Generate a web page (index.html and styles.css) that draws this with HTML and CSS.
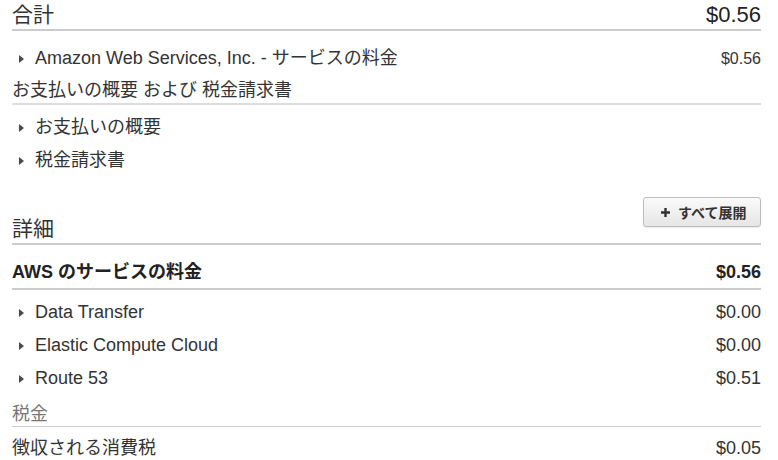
FILE: index.html
```html
<!DOCTYPE html>
<html lang="ja">
<head>
<meta charset="utf-8">
<link rel="stylesheet" href="styles.css">
</head>
<body>
<div class="page">
  <div class="heading-row">
    <h2 class="heading">合計</h2>
    <span class="heading-amount">$0.56</span>
  </div>
  <div class="row row-first">
    <span class="label"><span class="caret"></span>Amazon Web Services, Inc. - サービスの料金</span>
    <span class="amount amount-small">$0.56</span>
  </div>
  <div class="subheading">お支払いの概要 および 税金請求書</div>
  <div class="list list-pay">
    <div class="row"><span class="label"><span class="caret"></span>お支払いの概要</span></div>
    <div class="row"><span class="label"><span class="caret"></span>税金請求書</span></div>
  </div>

  <div class="detail-head">
    <h2 class="heading">詳細</h2>
    <button class="expand-btn" type="button">
      <svg class="plus" width="9" height="9" viewBox="0 0 9 9"><path d="M3.3 0h2.4v3.3H9v2.4H5.7V9H3.3V5.7H0V3.3h3.3z" fill="#333"/></svg>
      すべて展開
    </button>
  </div>
  <div class="group-row">
    <span class="group-label">AWS のサービスの料金</span>
    <span class="group-amount">$0.56</span>
  </div>
  <div class="list list-services">
    <div class="row"><span class="label"><span class="caret"></span>Data Transfer</span><span class="amount">$0.00</span></div>
    <div class="row"><span class="label"><span class="caret"></span>Elastic Compute Cloud</span><span class="amount">$0.00</span></div>
    <div class="row"><span class="label"><span class="caret"></span>Route 53</span><span class="amount">$0.51</span></div>
  </div>
  <div class="tax-head">税金</div>
  <div class="row tax-row">
    <span class="label">徴収される消費税</span>
    <span class="amount">$0.05</span>
  </div>
</div>
</body>
</html>
```
FILE: styles.css
```css
* { box-sizing: border-box; }
html, body { margin: 0; padding: 0; background: #fff; }
body {
  font-family: "Liberation Sans", Arial, "Noto Sans CJK JP", sans-serif;
  color: #333;
  font-size: 18px;
}
.page { padding: 0 17px 0 12px; width: 778px; }

.heading-row {
  display: flex;
  justify-content: space-between;
  align-items: center;
  padding-top: 1px;
  line-height: 28px;
  border-bottom: 2px solid #cccccc;
}
.heading { margin: 0; font-size: 21px; font-weight: normal; line-height: 28px; color: #333; }
.heading-amount { font-size: 22px; color: #222; }

.row {
  display: flex;
  justify-content: space-between;
  align-items: center;
  height: 33px;
  padding-top: 2px;
  line-height: 31px;
}
.row-first { margin-top: 10px; }
.label { display: flex; align-items: center; padding-left: 7px; }
.caret {
  width: 0; height: 0;
  border-left: 5px solid #4a4a4a;
  border-top: 4px solid transparent;
  border-bottom: 4px solid transparent;
  margin-right: 11px;
}
.amount { font-size: 18px; }
.amount-small { font-size: 16px; }

.subheading {
  padding-top: 4px;
  line-height: 25px;
  border-bottom: 2px solid #dddddd;
}
.list-pay { margin-top: 5px; }

.detail-head {
  margin-top: 21px;
  height: 48px;
  display: flex;
  justify-content: space-between;
  align-items: flex-end;
  border-bottom: 2px solid #cccccc;
}
.detail-head .heading { line-height: 28px; }
.expand-btn {
  align-self: flex-start;
  display: flex;
  align-items: center;
  gap: 8px;
  height: 30px;
  width: 118px;
  padding: 0 0 0 17px;
  margin: 0;
  font-family: "Liberation Sans", Arial, "Noto Sans CJK JP", sans-serif;
  font-size: 14px;
  font-weight: bold;
  color: #333;
  background: linear-gradient(#fafafa, #e6e6e6);
  border: 1px solid #bdbdbd;
  border-radius: 3px;
  box-shadow: 0 1px 1px rgba(0,0,0,0.08);
}
.plus { display: block; }

.group-row {
  margin-top: 10px;
  display: flex;
  justify-content: space-between;
  align-items: center;
  padding-top: 2px;
  line-height: 31px;
  font-weight: bold;
  color: #222;
  border-bottom: 2px solid #cccccc;
}
.list-services { margin-top: 5px; }

.tax-head {
  margin-top: 6px;
  padding-top: 2px;
  line-height: 24px;
  color: #777;
  border-bottom: 1px solid #cccccc;
}
.tax-row { margin-top: 4px; }
.tax-row .label { padding-left: 0; }
```
